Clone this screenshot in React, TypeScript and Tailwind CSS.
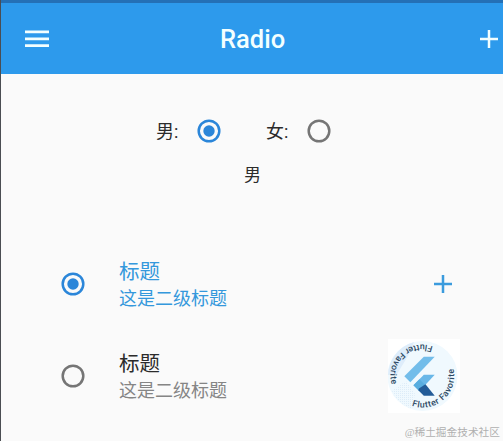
import { useState } from "react";

interface RadioProps {
  checked: boolean;
  onChange: () => void;
}

const tiles = [
  { id: 1, title: "标题", subtitle: "这是二级标题" },
  { id: 2, title: "标题", subtitle: "这是二级标题" },
];

function Radio({ checked, onChange }: RadioProps) {
  return (
    <button type="button" role="radio" aria-checked={checked} onClick={onChange} className="size-6 shrink-0">
      <svg viewBox="0 0 24 24" className={checked ? "text-[#2b86d9]" : "text-[#757575]"}>
        <circle cx="12" cy="12" r="10.3" fill="none" stroke="currentColor" strokeWidth="2.5" />
        {checked && <circle cx="12" cy="12" r="5.7" fill="currentColor" />}
      </svg>
    </button>
  );
}

function PlusIcon({ className }: { className: string }) {
  return (
    <svg viewBox="0 0 18 18" className={className} fill="none" stroke="currentColor" strokeWidth="2.5">
      <path d="M9 0v18M0 9h18" />
    </svg>
  );
}

function FlutterBadge() {
  return (
    <svg viewBox="0 0 72 74" className="h-[74px] w-[72px] bg-white">
      <defs>
        <path id="ring-bottom" d="M23.8 66.7A31.5 31.5 0 0 0 64.4 26.5" />
        <path id="ring-top" d="M44.8 7.5A31.5 31.5 0 0 0 4.6 48.5" />
        <pattern id="dots" width="2" height="2" patternUnits="userSpaceOnUse">
          <rect width="1" height="1" fill="#c9dff2" />
        </pattern>
      </defs>
      <circle cx="34.5" cy="37" r="35" fill="#f0f9fe" />
      <path d="M7 16A35 35 0 0 1 26 3L20 17 9 35 0 36A35 35 0 0 1 7 16z" fill="#deedfb" />
      <path d="M4 52l14-10 9 13-3 15A35 35 0 0 1 4 52z" fill="url(#dots)" opacity=".5" />
      <g transform="translate(12.6 17.7) scale(1.625)">
        <path d="M14.3 0 2.3 12 6 15.7 21 0z" fill="#72bdea" />
        <path d="M14.3 11.1 7.9 17.5l3.7 3.7 9.4-10.1z" fill="#68b7e8" />
        <path d="m11.6 13.8-3.7 3.7 3.7 3.7 3.7-3.7z" fill="#58addf" />
        <path d="m15.3 17-4 2.6-.4 1 3.4 3.4H21z" fill="#235c98" />
      </g>
      <text className="fill-[#2d4964] font-['Roboto'] text-[8.8px] font-medium">
        <textPath href="#ring-bottom" textLength="68">
          Flutter Favorite
        </textPath>
        <textPath href="#ring-top" textLength="69">
          Flutter Favorite
        </textPath>
      </text>
    </svg>
  );
}

export default function App() {
  const [gender, setGender] = useState("男");
  const [selected, setSelected] = useState(1);

  return (
    <div className="relative h-[441px] w-[503px] overflow-hidden border-l border-[#4a4d52] bg-[#fafafa] font-['Roboto','Noto_Sans_CJK_SC',sans-serif] text-[#2b2b2b]">
      <header className="flex h-[74px] items-center border-t-3 border-[#2470b6] bg-[#2d9aec] pr-[5px] pl-6 text-[#f3ffff]">
        <svg viewBox="0 0 24 18" className="h-[18px] w-6" fill="currentColor">
          <path d="M0 0.5h24v2.7H0zM0 7.5h24v2.7H0zM0 14.3h24v2.7H0z" />
        </svg>
        <h1 className="mr-auto ml-[171px] pt-0.5 text-[25.5px] leading-none font-medium">Radio</h1>
        <PlusIcon className="size-[18px]" />
      </header>

      <div className="mt-[42px] flex h-[30px] items-center pl-[155px] text-[18px] leading-none">
        <span className="w-[41px] pt-0.5">男:</span>
        <Radio checked={gender === "男"} onChange={() => setGender("男")} />
        <span className="ml-[45px] w-[41px] pt-0.5">女:</span>
        <Radio checked={gender === "女"} onChange={() => setGender("女")} />
      </div>
      <p className="mt-4 h-[26px] pl-px text-center text-[17px] leading-[26px]">{gender}</p>

      <div className="mt-[50px]">
        {tiles.map((tile) => {
          const active = tile.id === selected;
          return (
            <div key={tile.id} className="flex h-[92px] items-center pl-[60px]">
              <Radio checked={active} onChange={() => setSelected(tile.id)} />
              <div className="ml-[34px] flex-1">
                <p className={`text-[20.5px] leading-[28px] ${active ? "text-[#3498dc]" : "text-[#2b2b2b]"}`}>
                  {tile.title}
                </p>
                <p className={`text-[18px] leading-[25px] ${active ? "text-[#3498dc]" : "text-[#858585]"}`}>
                  {tile.subtitle}
                </p>
              </div>
              <div className="mr-[43px] flex w-[72px] justify-end">
                {tile.id === 1 ? <PlusIcon className="mr-2 size-[18px] text-[#3b9bdd]" /> : <FlutterBadge />}
              </div>
            </div>
          );
        })}
      </div>

      <span className="absolute right-[3px] bottom-[1px] font-['Liberation_Serif','Noto_Sans_CJK_SC',serif] text-[10.7px] leading-[16px] text-[#b0b0b0]">
        @稀土掘金技术社区
      </span>
    </div>
  );
}
